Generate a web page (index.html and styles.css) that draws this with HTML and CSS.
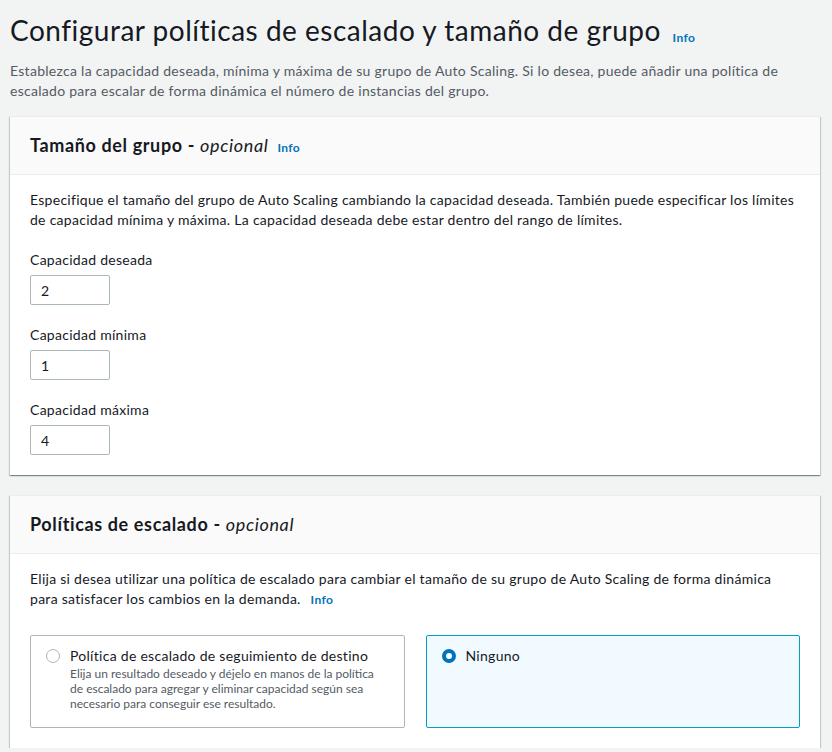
FILE: index.html
```html
<!DOCTYPE html>
<html lang="es">
<head>
<meta charset="utf-8">
<title>Configurar políticas de escalado</title>
<link rel="stylesheet" href="styles.css">
</head>
<body>
<div class="page">
  <header class="page-header">
    <h1 class="page-title">Configurar políticas de escalado y tamaño de grupo <a class="info info-title" href="#">Info</a></h1>
    <p class="page-desc">Establezca la capacidad deseada, mínima y máxima de su grupo de Auto Scaling. Si lo desea, puede añadir una política de escalado para escalar de forma dinámica el número de instancias del grupo.</p>
  </header>

  <section class="card">
    <div class="card-header">
      <h2 class="card-title">Tamaño del grupo - <em>opcional</em> <a class="info" href="#">Info</a></h2>
    </div>
    <div class="card-body">
      <p class="card-text">Especifique el tamaño del grupo de Auto Scaling cambiando la capacidad deseada. También puede especificar los límites de capacidad mínima y máxima. La capacidad deseada debe estar dentro del rango de límites.</p>
      <div class="field">
        <label class="field-label">Capacidad deseada</label>
        <input class="field-input" type="text" value="2">
      </div>
      <div class="field">
        <label class="field-label">Capacidad mínima</label>
        <input class="field-input" type="text" value="1">
      </div>
      <div class="field">
        <label class="field-label">Capacidad máxima</label>
        <input class="field-input" type="text" value="4">
      </div>
    </div>
  </section>

  <section class="card">
    <div class="card-header">
      <h2 class="card-title">Políticas de escalado - <em>opcional</em></h2>
    </div>
    <div class="card-body">
      <p class="card-text">Elija si desea utilizar una política de escalado para cambiar el tamaño de su grupo de Auto Scaling de forma dinámica para satisfacer los cambios en la demanda. <a class="info info-inline" href="#">Info</a></p>
      <div class="tiles">
        <div class="tile">
          <span class="radio"></span>
          <div class="tile-content">
            <div class="tile-title">Política de escalado de seguimiento de destino</div>
            <div class="tile-desc">Elija un resultado deseado y déjelo en manos de la política de escalado para agregar y eliminar capacidad según sea necesario para conseguir ese resultado.</div>
          </div>
        </div>
        <div class="tile tile-selected">
          <span class="radio radio-checked"></span>
          <div class="tile-content">
            <div class="tile-title">Ninguno</div>
          </div>
        </div>
      </div>
    </div>
  </section>
</div>
</body>
</html>
```

FILE: styles.css
```css
* { box-sizing: border-box; }

html, body {
  margin: 0;
  padding: 0;
}

body {
  background: #f2f3f3;
  font-family: Lato, "Liberation Sans", sans-serif;
  font-size: 14px;
  line-height: 20px;
  letter-spacing: 0.02em;
  color: #16191f;
}

.page {
  padding: 12px 12px 0 10px;
}

.page-title {
  margin: 0;
  font-size: 28px;
  line-height: 36px;
  font-weight: 400;
  letter-spacing: 0.018em;
  color: #16191f;
}

.info {
  font-size: 12px;
  line-height: 1;
  font-weight: 700;
  color: #0073bb;
  text-decoration: none;
  letter-spacing: 0.03em;
}

.info-title {
  margin-left: 4px;
  vertical-align: -1px;
}

.info-inline {
  margin-left: 6px;
}

.page-desc {
  margin: 13px 0 0;
  color: #545b64;
}

.card {
  margin-top: 15px;
  background: #fff;
  border-top: 1px solid #eaeded;
  box-shadow: 0 1px 1px 0 rgba(0, 28, 36, 0.3), 1px 1px 1px 0 rgba(0, 28, 36, 0.15), -1px 1px 1px 0 rgba(0, 28, 36, 0.15);
}

.card + .card {
  margin-top: 20px;
}

.card-header {
  background: #fafafa;
  border-bottom: 1px solid #eaeded;
  padding: 17px 20px 18px;
}

.card-title {
  margin: 0;
  font-size: 18px;
  line-height: 22px;
  font-weight: 700;
  letter-spacing: 0.035em;
}

.card-title em {
  font-weight: 400;
}

.card-title .info {
  margin-left: 4px;
}

.card-body {
  padding: 15px 20px 20px;
}

.card-text {
  margin: 0;
}

.field {
  margin-top: 20px;
  display: flex;
  flex-direction: column;
  align-items: flex-start;
  gap: 5px;
}

.field-label {
  line-height: 20px;
}

.field-input {
  width: 80px;
  height: 30px;
  border: 1px solid #aab7b8;
  border-radius: 2px;
  padding: 0 10px;
  font-family: inherit;
  font-size: 14px;
  color: #16191f;
  background: #fff;
}

.tiles {
  margin-top: 26px;
  display: grid;
  grid-template-columns: 1fr 1fr;
  gap: 21px;
}

.tile {
  display: flex;
  align-items: flex-start;
  gap: 10px;
  min-height: 93px;
  padding: 10px 15px 15px;
  border: 1px solid #aab7b8;
  border-radius: 2px;
  background: #fff;
}

.tile-selected {
  border-color: #00a1c9;
  background: #f1faff;
}

.radio {
  flex: none;
  width: 14px;
  height: 14px;
  margin-top: 3px;
  border-radius: 50%;
  border: 1px solid #aab7b8;
  background: #fff;
}

.radio-checked {
  border: 4px solid #0073bb;
}

.tile-title {
  line-height: 20px;
}

.tile-desc {
  font-size: 12px;
  line-height: 15px;
  letter-spacing: 0;
  color: #545b64;
}
```
